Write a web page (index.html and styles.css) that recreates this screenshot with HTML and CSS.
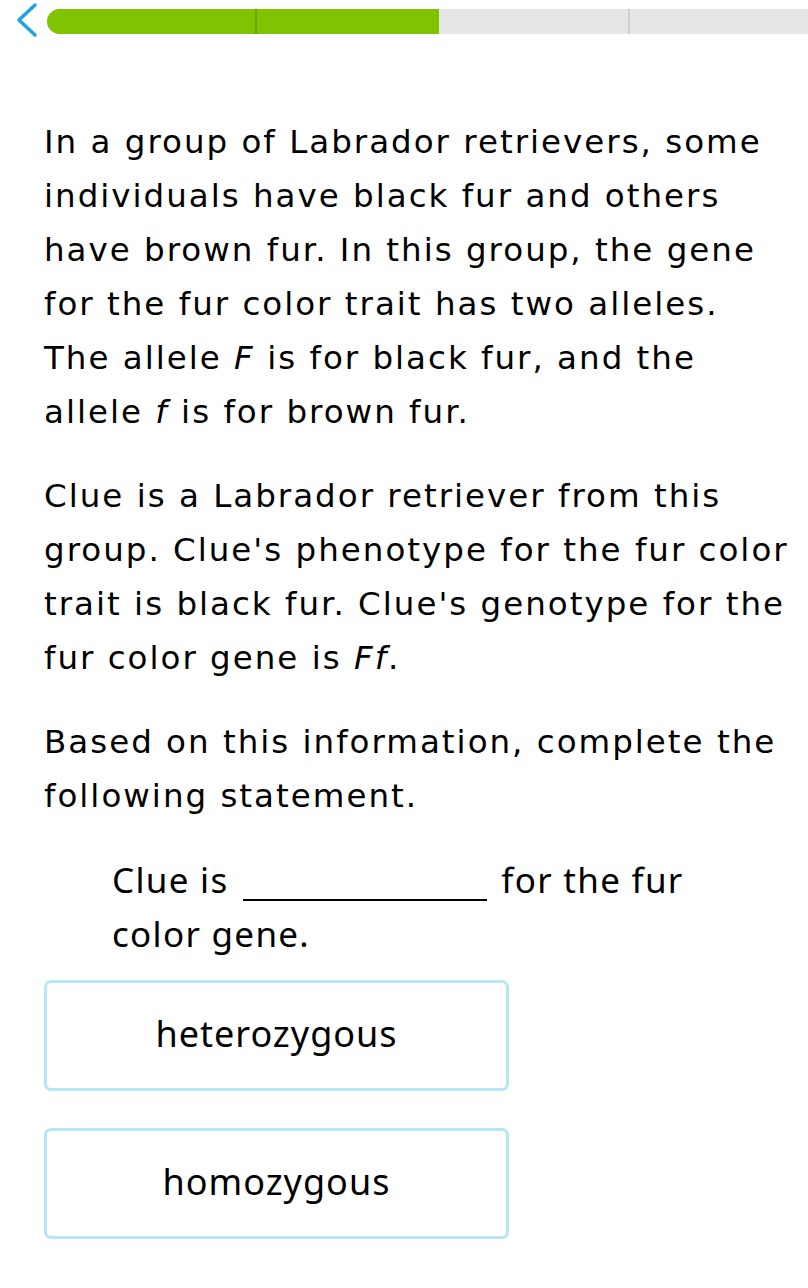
FILE: index.html
```html
<!DOCTYPE html>
<html lang="en">
<head>
    <meta charset="UTF-8">
    <meta name="viewport" content="width=device-width, initial-scale=1.0">
    <title>Genotype and phenotype</title>
    <link rel="stylesheet" href="styles.css">
</head>
<body>
    <header class="top-bar">
        <button class="back-btn" aria-label="Back">
            <svg width="26" height="36" viewBox="0 0 26 36">
                <polyline points="21,3 5,18 21,33" fill="none" stroke="#1ba5de" stroke-width="3.5" stroke-linecap="round" stroke-linejoin="round"/>
            </svg>
        </button>
        <div class="progress">
            <div class="progress-fill" style="width: 51.5%;"></div>
            <span class="tick tick-done" style="left: 27.3%;"></span>
            <span class="tick" style="left: 76.3%;"></span>
        </div>
    </header>

    <main class="question">
        <p>In a group of Labrador retrievers, some individuals have black fur and others have brown fur. In this group, the gene for the fur color trait has two alleles. The allele <i>F</i> is for black fur, and the allele <i>f</i> is for brown fur.</p>

        <p>Clue is a Labrador retriever from this group. Clue's phenotype for the fur color trait is black fur. Clue's genotype for the fur color gene is <i>Ff</i>.</p>

        <p>Based on this information, complete the following statement.</p>

        <p class="statement">Clue is <span class="blank"></span> for the fur color gene.</p>

        <div class="choices">
            <button class="choice">heterozygous</button>
            <button class="choice">homozygous</button>
        </div>
    </main>
</body>
</html>
```

FILE: styles.css
```css
* {
    margin: 0;
    padding: 0;
    box-sizing: border-box;
}

body {
    font-family: "DejaVu Sans", Verdana, sans-serif;
    background: #fff;
    color: #000;
    width: 808px;
}

.top-bar {
    display: flex;
    align-items: center;
    height: 42px;
    padding-left: 14px;
}

.back-btn {
    border: none;
    background: none;
    width: 33px;
    height: 36px;
    display: flex;
    align-items: center;
    margin-top: -2px;
}

.progress {
    position: relative;
    flex: 1;
    height: 25px;
    background: #e6e6e6;
    border-radius: 13px 0 0 13px;
    overflow: hidden;
}

.progress-fill {
    height: 100%;
    background: #80c300;
}

.tick {
    position: absolute;
    top: 0;
    width: 2px;
    height: 100%;
    background: #cfcfcf;
}

.tick-done {
    background: #6aa400;
}

.question {
    padding: 73px 16px 0 44px;
    font-size: 32.5px;
    line-height: 54px;
    letter-spacing: 2px;
}

.question p {
    margin-bottom: 30px;
}

.statement {
    font-family: "Noto Sans", sans-serif;
    font-size: 35px;
    line-height: 54px;
    letter-spacing: 1.3px;
    width: 660px;
    padding-left: 68px;
    margin-top: 4px;
}

.blank {
    display: inline-block;
    width: 244px;
    border-bottom: 2px solid #000;
    vertical-align: -8px;
    margin: 0 4px;
}

.choices {
    display: flex;
    flex-direction: column;
    gap: 37px;
    margin-top: -11px;
}

.choice {
    width: 465px;
    height: 111px;
    background: #fff;
    border: 3px solid #b5e6f8;
    border-radius: 7px;
    font-family: "Noto Sans", sans-serif;
    font-size: 36px;
    letter-spacing: 1px;
    color: #000;
    padding-bottom: 4px;
}
```
